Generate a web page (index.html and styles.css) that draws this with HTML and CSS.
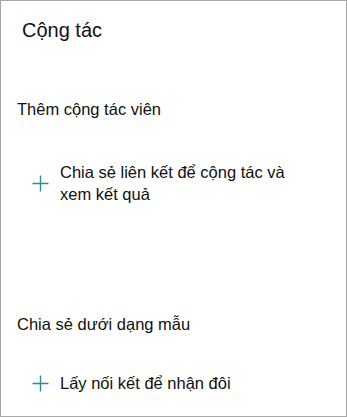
FILE: index.html
```html
<!DOCTYPE html>
<html lang="vi">
<head>
  <meta charset="UTF-8">
  <meta name="viewport" content="width=device-width, initial-scale=1.0">
  <title>Cộng tác</title>
  <link rel="stylesheet" href="styles.css">
</head>
<body>
  <div class="panel">
    <h1 class="panel-title">Cộng tác</h1>

    <div class="section section-first">
      <div class="section-label">Thêm cộng tác viên</div>
      <a href="#" class="action action-first">
        <svg class="plus" width="17" height="17" viewBox="0 0 17 17">
          <path d="M8.5 0.5 V16.5 M0.5 8.5 H16.5" />
        </svg>
        <span class="action-text">Chia sẻ liên kết để cộng tác và xem kết quả</span>
      </a>
    </div>

    <div class="section section-second">
      <div class="section-label">Chia sẻ dưới dạng mẫu</div>
      <a href="#" class="action action-second">
        <svg class="plus" width="17" height="17" viewBox="0 0 17 17">
          <path d="M8.5 0.5 V16.5 M0.5 8.5 H16.5" />
        </svg>
        <span class="action-text">Lấy nối kết để nhận đôi</span>
      </a>
    </div>
  </div>
</body>
</html>
```

FILE: styles.css
```css
body {
  margin: 0;
  font-family: "Liberation Sans", Arial, sans-serif;
  color: #111;
  background-color: white;
}

.panel {
  box-sizing: border-box;
  width: 347px;
  height: 417px;
  border: 1px solid #a6a6a6;
  padding: 15px 40px 0 16px;
}

.panel-title {
  margin: 0 0 0 5px;
  font-size: 20px;
  line-height: 28px;
  font-weight: normal;
}

.section-first {
  margin-top: 54px;
}

.section-second {
  margin-top: 108px;
}

.section-label {
  font-size: 16.5px;
  line-height: 22px;
}

.action {
  display: flex;
  align-items: center;
  gap: 11px;
  padding-left: 15px;
  font-size: 16.5px;
  line-height: 22px;
  color: #111;
  text-decoration: none;
}

.action-first {
  margin-top: 41px;
}

.action-second {
  margin-top: 37px;
}

.plus {
  flex: none;
  stroke: #2b8d8d;
  stroke-width: 1.4;
  fill: none;
}

.action-text {
  max-width: 250px;
}
```
